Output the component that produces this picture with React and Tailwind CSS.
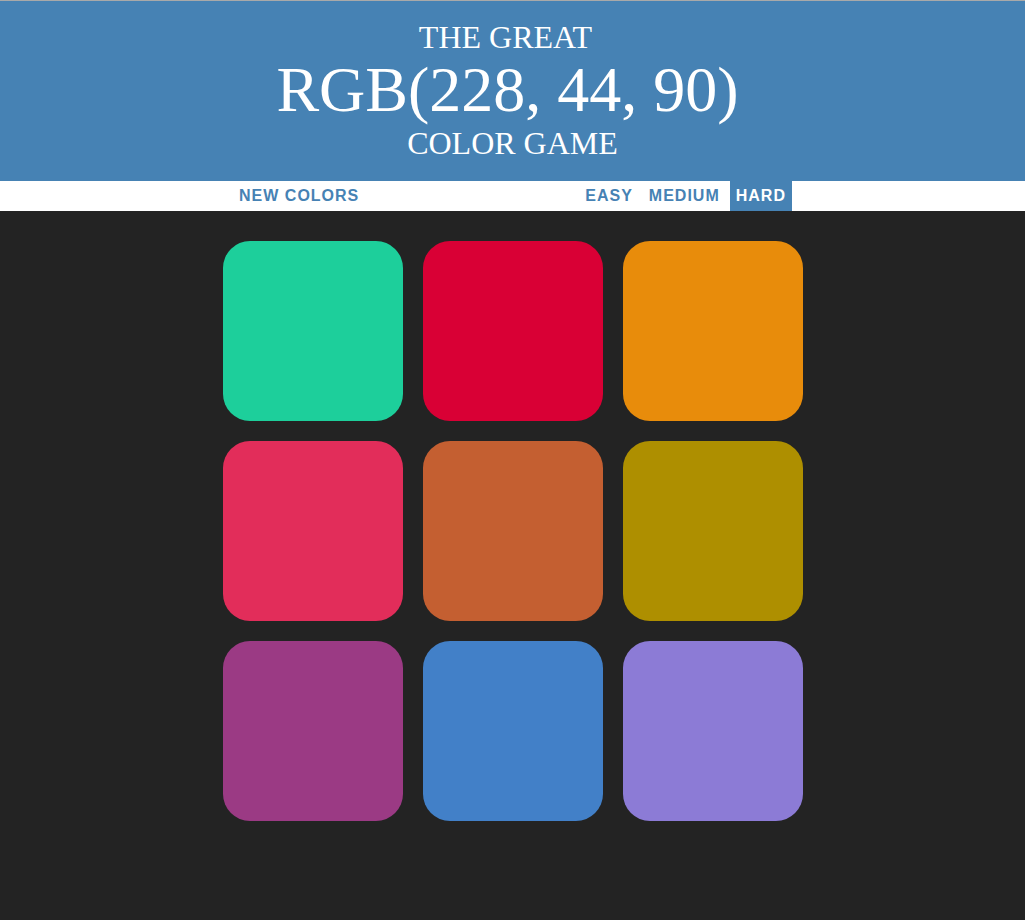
import React, { useState } from "react"

const colors = [
  "#1dcf9b",
  "#d90035",
  "#e88c0b",
  "#e22d5a",
  "#c45f31",
  "#ae8f00",
  "#9b3a84",
  "#4280c8",
  "#8c7bd6",
]

function App() {
  const [mode, setMode] = useState("hard")

  const modeClass = (name) =>
    mode === name
      ? "bg-[#4682b4] text-white"
      : "bg-white text-[#4682b4]"

  return (
    <div className="min-h-[920px] bg-[#232323] font-['Liberation_Sans',Arial,sans-serif]">
      <h1 className="border-t border-[#a9a9a9] bg-[#4682b4] pt-[19px] pb-[20px] text-center font-['Liberation_Serif','Times_New_Roman',serif] text-[32px] font-normal uppercase leading-[1.1] text-white">
        <span className="pr-[14px]">The Great</span>
        <br />
        <span className="pr-[10px] text-[64px]">RGB(228, 44, 90)</span>
        <br />
        Color Game
      </h1>

      <div className="flex h-[30px] justify-center bg-white text-[16px] font-bold uppercase tracking-[1px]">
        <button className="h-full px-[6px] uppercase text-[#4682b4]">
          New Colors
        </button>
        <span className="w-[214px]"></span>
        <button
          onClick={() => setMode("easy")}
          className={`h-full px-[6px] uppercase ${modeClass("easy")}`}
        >
          Easy
        </button>
        <button
          onClick={() => setMode("medium")}
          className={`ml-[4px] h-full px-[6px] uppercase ${modeClass("medium")}`}
        >
          Medium
        </button>
        <button
          onClick={() => setMode("hard")}
          className={`ml-[4px] h-full px-[6px] uppercase ${modeClass("hard")}`}
        >
          Hard
        </button>
      </div>

      <div className="mx-auto mt-[20px] grid w-[600px] grid-cols-3">
        {colors.map((color) => (
          <div key={color} className="p-[10px]">
            <div
              className="aspect-square w-full rounded-[15%]"
              style={{ backgroundColor: color }}
            ></div>
          </div>
        ))}
      </div>
    </div>
  )
}

export default App
